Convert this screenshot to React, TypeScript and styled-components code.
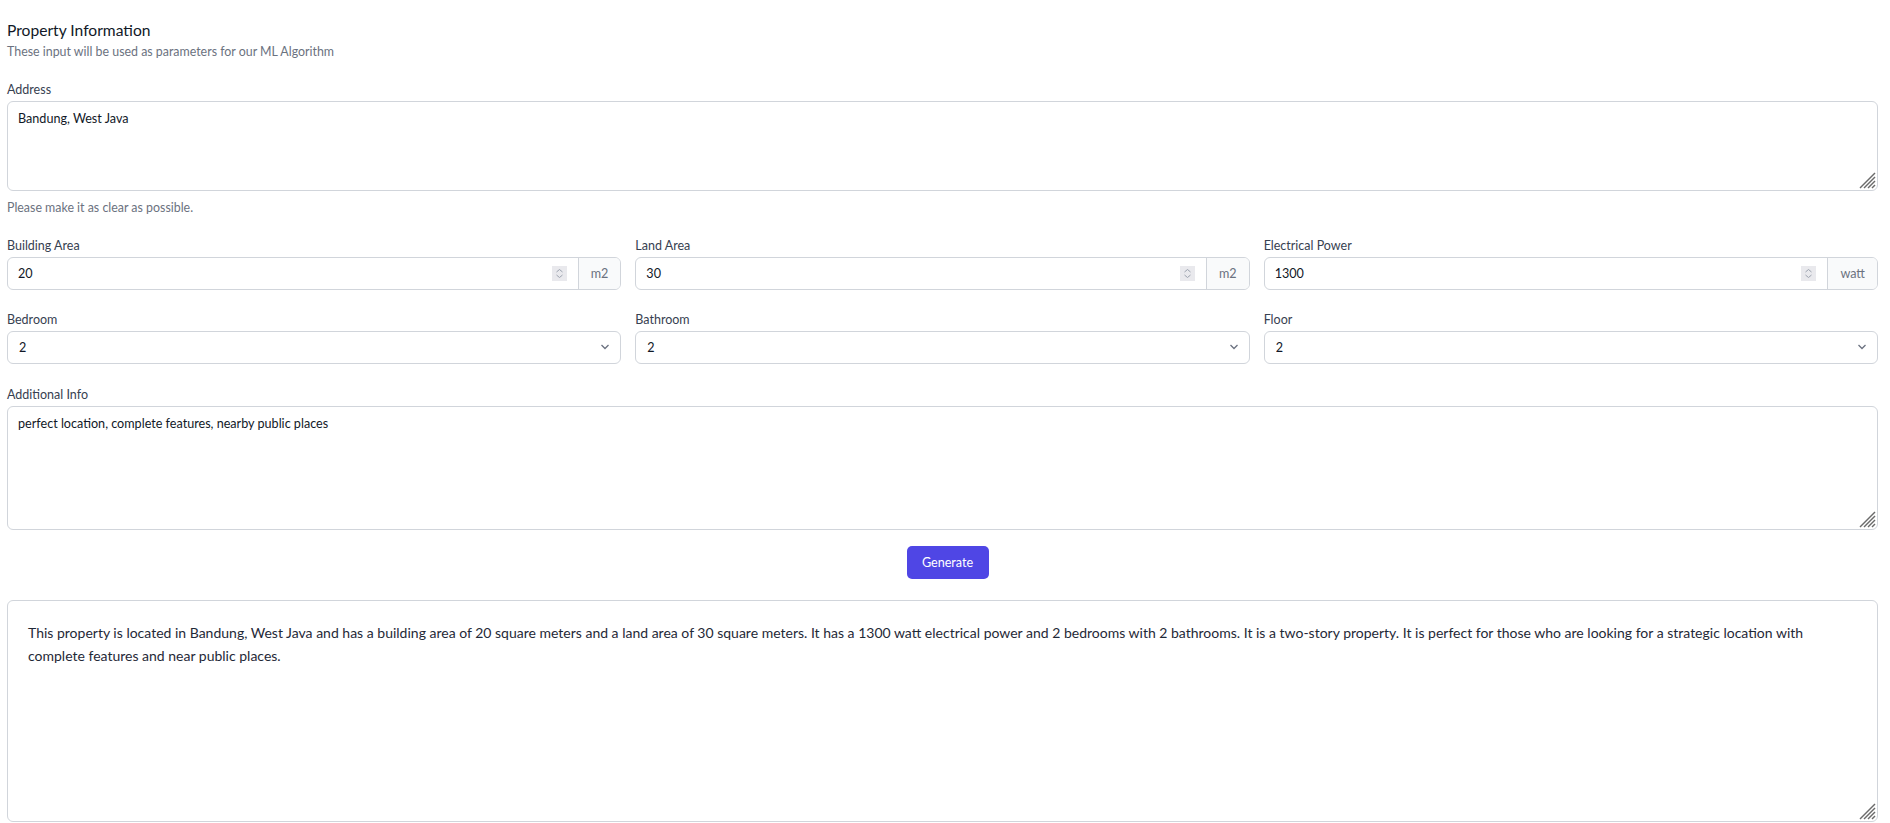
import React, { useState } from "react";
import styled, { createGlobalStyle } from "styled-components";

const GlobalStyle = createGlobalStyle`
    html, body {
        margin: 0;
        padding: 0;
        background: #ffffff;
    }
    body {
        font-family: Lato, "Liberation Sans", Arial, sans-serif;
        color: #111827;
    }
    * {
        box-sizing: border-box;
    }
`;

const Page = styled.div`
    padding: 20px 12px 0 7px;
    display: flex;
    flex-direction: column;
`;

const Title = styled.h2`
    margin: 0;
    font-size: 15.6px;
    line-height: 20px;
    font-weight: 400;
    color: #111827;
`;

const Subtitle = styled.p`
    margin: 4px 0 0;
    font-size: 12.4px;
    line-height: 16px;
    color: #6b7280;
`;

const Field = styled.div<{ $gap?: number }>`
    display: flex;
    flex-direction: column;
    margin-top: ${(p) => p.$gap ?? 0}px;
    min-width: 0;
`;

const Label = styled.label`
    font-size: 12.5px;
    line-height: 14px;
    margin-bottom: 4px;
    color: #374151;
`;

const AreaWrap = styled.div`
    position: relative;
`;

const TextArea = styled.textarea<{ $height: number }>`
    display: block;
    width: 100%;
    height: ${(p) => p.$height}px;
    border: 1px solid #d1d5db;
    border-radius: 6px;
    padding: 9px 10px;
    font-family: inherit;
    font-size: 12.6px;
    line-height: 16px;
    color: #111827;
    background: #ffffff;
    resize: none;
    outline: none;
`;

/* hatch drawn over the corner, like the browser's resize grip */
const Grip = styled.svg`
    position: absolute;
    right: 2px;
    bottom: 2px;
    pointer-events: none;
`;

const Helper = styled.p`
    margin: 10px 0 0;
    font-size: 12.4px;
    line-height: 14px;
    color: #6b7280;
`;

const Row = styled.div<{ $gap: number }>`
    display: grid;
    grid-template-columns: repeat(3, 1fr);
    column-gap: 14px;
    margin-top: ${(p) => p.$gap}px;
`;

const InputGroup = styled.div`
    display: flex;
    height: 33px;
    border: 1px solid #d1d5db;
    border-radius: 6px;
    background: #ffffff;
    overflow: hidden;
`;

const NumberInput = styled.input`
    flex: 1;
    min-width: 0;
    border: none;
    outline: none;
    padding: 0 10px;
    font-family: inherit;
    font-size: 12.6px;
    color: #111827;
    background: transparent;
`;

const Spinner = styled.span`
    align-self: center;
    width: 15px;
    height: 15px;
    margin-right: 11px;
    background: #e9e9ed;
    display: flex;
    align-items: center;
    justify-content: center;
`;

const Addon = styled.span`
    display: flex;
    align-items: center;
    padding: 0 12px;
    border-left: 1px solid #d1d5db;
    background: #f9fafb;
    color: #6b7280;
    font-size: 12.6px;
`;

const SelectBox = styled.div`
    position: relative;
    height: 33px;
`;

const Select = styled.select`
    width: 100%;
    height: 100%;
    appearance: none;
    border: 1px solid #d1d5db;
    border-radius: 6px;
    padding: 0 30px 0 11px;
    font-family: inherit;
    font-size: 12.6px;
    color: #111827;
    background: #ffffff;
    outline: none;
`;

const Chevron = styled.svg`
    position: absolute;
    right: 11px;
    top: 12px;
    pointer-events: none;
`;

const ButtonRow = styled.div`
    display: flex;
    justify-content: center;
    margin-top: 16px;
    padding-left: 10px;
`;

const Button = styled.button`
    width: 82px;
    height: 33px;
    border: none;
    border-radius: 5px;
    background: #4f46e5;
    color: #ffffff;
    font-family: inherit;
    font-size: 12.6px;
    cursor: pointer;
`;

const Output = styled(TextArea)`
    padding: 20px 20px;
    font-size: 14px;
    line-height: 23px;
    color: #1f2937;
`;

const OutputWrap = styled(AreaWrap)`
    margin-top: 21px;
`;

function Hatch() {
    return (
        <Grip width="17" height="17" viewBox="0 0 17 17" fill="none" stroke="#6b6b6b" strokeWidth="1.4">
            <path d="M1 16 L16 1" />
            <path d="M5 16 L16 5" />
            <path d="M9 16 L16 9" />
            <path d="M13 16 L16 13" />
        </Grip>
    );
}

interface UnitFieldProps {
    label: string;
    value: string;
    unit: string;
}

function UnitField({ label, value, unit }: UnitFieldProps) {
    const [v, setV] = useState(value);
    return (
        <Field>
            <Label>{label}</Label>
            <InputGroup>
                <NumberInput value={v} onChange={(e) => setV(e.target.value)} />
                <Spinner>
                    <svg width="9" height="11" viewBox="0 0 9 11" fill="none" stroke="#9ca3af" strokeWidth="1">
                        <path d="M1.5 4 L4.5 1.5 L7.5 4" />
                        <path d="M1.5 7 L4.5 9.5 L7.5 7" />
                    </svg>
                </Spinner>
                <Addon>{unit}</Addon>
            </InputGroup>
        </Field>
    );
}

function SelectField({ label }: { label: string }) {
    return (
        <Field>
            <Label>{label}</Label>
            <SelectBox>
                <Select defaultValue="2">
                    {[1, 2, 3, 4, 5].map((n) => (
                        <option key={n} value={n}>
                            {n}
                        </option>
                    ))}
                </Select>
                <Chevron width="10" height="8" viewBox="0 0 10 8" fill="none" stroke="#6b7280" strokeWidth="1.3">
                    <path d="M1.5 2 L5 5.5 L8.5 2" />
                </Chevron>
            </SelectBox>
        </Field>
    );
}

const RESULT =
    "This property is located in Bandung, West Java and has a building area of 20 square meters and a land area of 30 square meters. It has a 1300 watt electrical power and 2 bedrooms with 2 bathrooms. It is a two-story property. It is perfect for those who are looking for a strategic location with complete features and near public places.";

export default function App() {
    const [address, setAddress] = useState("Bandung, West Java");
    const [info, setInfo] = useState("perfect location, complete features, nearby public places");
    return (
        <>
            <GlobalStyle />
            <Page>
                <Title>Property Information</Title>
                <Subtitle>These input will be used as parameters for our ML Algorithm</Subtitle>

                <Field $gap={23}>
                    <Label>Address</Label>
                    <AreaWrap>
                        <TextArea $height={90} value={address} onChange={(e) => setAddress(e.target.value)} />
                        <Hatch />
                    </AreaWrap>
                </Field>
                <Helper>Please make it as clear as possible.</Helper>

                <Row $gap={24}>
                    <UnitField label="Building Area" value="20" unit="m2" />
                    <UnitField label="Land Area" value="30" unit="m2" />
                    <UnitField label="Electrical Power" value="1300" unit="watt" />
                </Row>

                <Row $gap={23}>
                    <SelectField label="Bedroom" />
                    <SelectField label="Bathroom" />
                    <SelectField label="Floor" />
                </Row>

                <Field $gap={24}>
                    <Label>Additional Info</Label>
                    <AreaWrap>
                        <TextArea $height={124} value={info} onChange={(e) => setInfo(e.target.value)} />
                        <Hatch />
                    </AreaWrap>
                </Field>

                <ButtonRow>
                    <Button type="button">Generate</Button>
                </ButtonRow>

                <OutputWrap>
                    <Output $height={222} readOnly value={RESULT} />
                    <Hatch />
                </OutputWrap>
            </Page>
        </>
    );
}
